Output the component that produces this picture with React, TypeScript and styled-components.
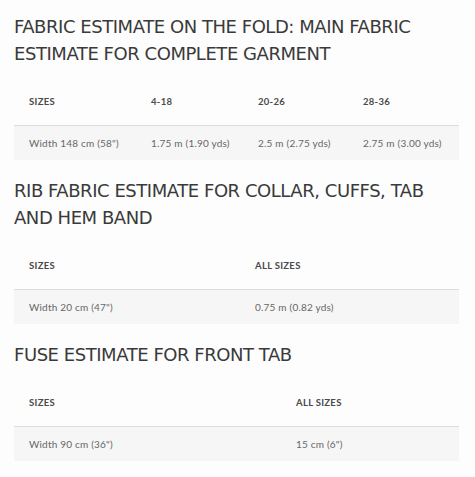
import styled, { createGlobalStyle } from 'styled-components'

const Global = createGlobalStyle`
  html, body { margin: 0; padding: 0; background: #fdfdfd; }
  body { font-family: "DejaVu Sans", sans-serif; color: #3a3a3a; }
`

const Page = styled.div`
  padding: 13px 16px 0 14px;
  display: flex;
  flex-direction: column;
`

const Heading = styled.h2`
  margin: 0;
  font-family: "DejaVu Sans", sans-serif;
  font-weight: 400;
  font-size: 18px;
  letter-spacing: -0.45px;
  line-height: 27px;
  color: #3a3a3a;
  text-transform: uppercase;
`

const Table = styled.table`
  width: 100%;
  table-layout: fixed;
  border-collapse: collapse;
  margin: 20px 0 17px;
  font-family: Lato, "DejaVu Sans", sans-serif;
  font-size: 10px;
  line-height: 12px;
`

const Th = styled.th`
  text-align: left;
  font-weight: 700;
  font-size: 9.5px;
  letter-spacing: 0.3px;
  color: #4a4a4a;
  padding: 9px 15px 17px;
  border-bottom: 1px solid #dddddd;
  white-space: nowrap;
`

const Td = styled.td`
  padding: 11px 15px;
  background: #f6f6f6;
  color: #666;
  white-space: nowrap;
  letter-spacing: 0.2px;
`

type Section = { title: string; head: string[]; row: string[]; widths: number[] }

const sections: Section[] = [
  {
    title: 'Fabric estimate on the fold: main fabric estimate for complete garment',
    head: ['Sizes', '4-18', '20-26', '28-36'],
    row: ['Width 148 cm (58")', '1.75 m (1.90 yds)', '2.5 m (2.75 yds)', '2.75 m (3.00 yds)'],
    widths: [122, 107, 105, 111],
  },
  {
    title: 'Rib fabric estimate for collar, cuffs, tab and hem band',
    head: ['Sizes', 'All sizes'],
    row: ['Width 20 cm (47")', '0.75 m (0.82 yds)'],
    widths: [226, 219],
  },
  {
    title: 'Fuse estimate for front tab',
    head: ['Sizes', 'All sizes'],
    row: ['Width 90 cm (36")', '15 cm (6")'],
    widths: [267, 178],
  },
]

export default function App() {
  return (
    <>
      <Global />
      <Page>
        {sections.map((s) => (
          <div key={s.title}>
            <Heading>{s.title}</Heading>
            <Table>
              <colgroup>
                {s.widths.map((w, i) => <col key={i} style={{ width: w }} />)}
              </colgroup>
              <thead>
                <tr>{s.head.map((h) => <Th key={h}>{h.toUpperCase()}</Th>)}</tr>
              </thead>
              <tbody>
                <tr>{s.row.map((c) => <Td key={c}>{c}</Td>)}</tr>
              </tbody>
            </Table>
          </div>
        ))}
      </Page>
    </>
  )
}
